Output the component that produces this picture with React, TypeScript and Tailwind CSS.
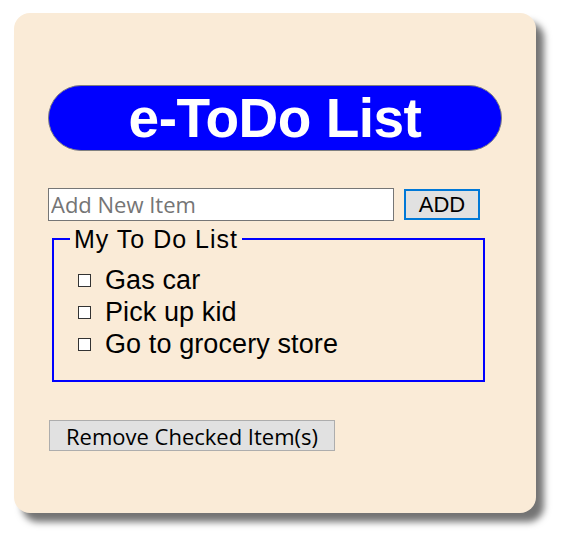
import { useState } from "react";

const initialItems = ["Gas car", "Pick up kid", "Go to grocery store"];

export default function App() {
  const [items, setItems] = useState(initialItems.map((text) => ({ text, done: false })));
  const [draft, setDraft] = useState("");

  const add = () => {
    if (!draft.trim()) return;
    setItems([...items, { text: draft.trim(), done: false }]);
    setDraft("");
  };

  return (
    <div className="min-h-[547px] bg-white pl-[14px] pt-[13px]">
      <div className="h-[500px] w-[522px] rounded-[16px] bg-[#faebd7] px-[34px] pt-[72px] shadow-[8px_9px_7px_rgba(0,0,0,0.55)]">
        {/* Title */}
        <div className="flex h-[66px] items-center justify-center rounded-full border border-[#808080] bg-[#0000ff]">
          <h1 className="font-['Liberation_Sans',Arial,sans-serif] text-[55px] leading-[55px] font-bold tracking-[-0.5px] text-white">
            e-ToDo List
          </h1>
        </div>

        {/* Add row */}
        <div className="mt-[37px] flex items-center gap-[10px]">
          <input
            value={draft}
            onChange={(e) => setDraft(e.target.value)}
            placeholder="Add New Item"
            className="h-[33px] w-[346px] border border-[#767676] bg-white px-[2px] font-['Open_Sans',sans-serif] text-[22px] text-black outline-none placeholder:text-[#757575]"
          />
          <button
            onClick={add}
            className="h-[31px] w-[76px] border-2 border-[#0078d7] bg-[#e1e1e1] font-['Liberation_Sans',Arial,sans-serif] text-[22px] leading-none text-black"
          >
            ADD
          </button>
        </div>

        {/* List */}
        <fieldset className="mt-[4px] ml-[4px] w-[433px] border-2 border-[#0000ff] pb-[20px] pl-[24px]">
          <legend className="ml-[-8px] px-[4px] font-['Liberation_Sans',Arial,sans-serif] text-[25px] leading-[28px] tracking-[1px] text-black">
            My To Do List
          </legend>
          <ul className="pt-[11px]">
            {items.map((it, i) => (
              <li key={i} className="flex h-[32px] items-center gap-[14px] font-['Liberation_Sans',Arial,sans-serif] text-[27px] leading-[32px] tracking-[0.1px] text-black">
                <input
                  type="checkbox"
                  checked={it.done}
                  onChange={() => setItems(items.map((x, j) => (j === i ? { ...x, done: !x.done } : x)))}
                  className="m-0 h-[13px] w-[13px] shrink-0 appearance-none border border-[#333] bg-white checked:bg-[#333]"
                />
                <span>{it.text}</span>
              </li>
            ))}
          </ul>
        </fieldset>

        <button
          onClick={() => setItems(items.filter((x) => !x.done))}
          className="mt-[38px] ml-[1px] h-[31px] w-[286px] border border-[#adadad] bg-[#e1e1e1] font-['Open_Sans',sans-serif] text-[22px] leading-none text-black"
        >
          Remove Checked Item(s)
        </button>
      </div>
    </div>
  );
}
